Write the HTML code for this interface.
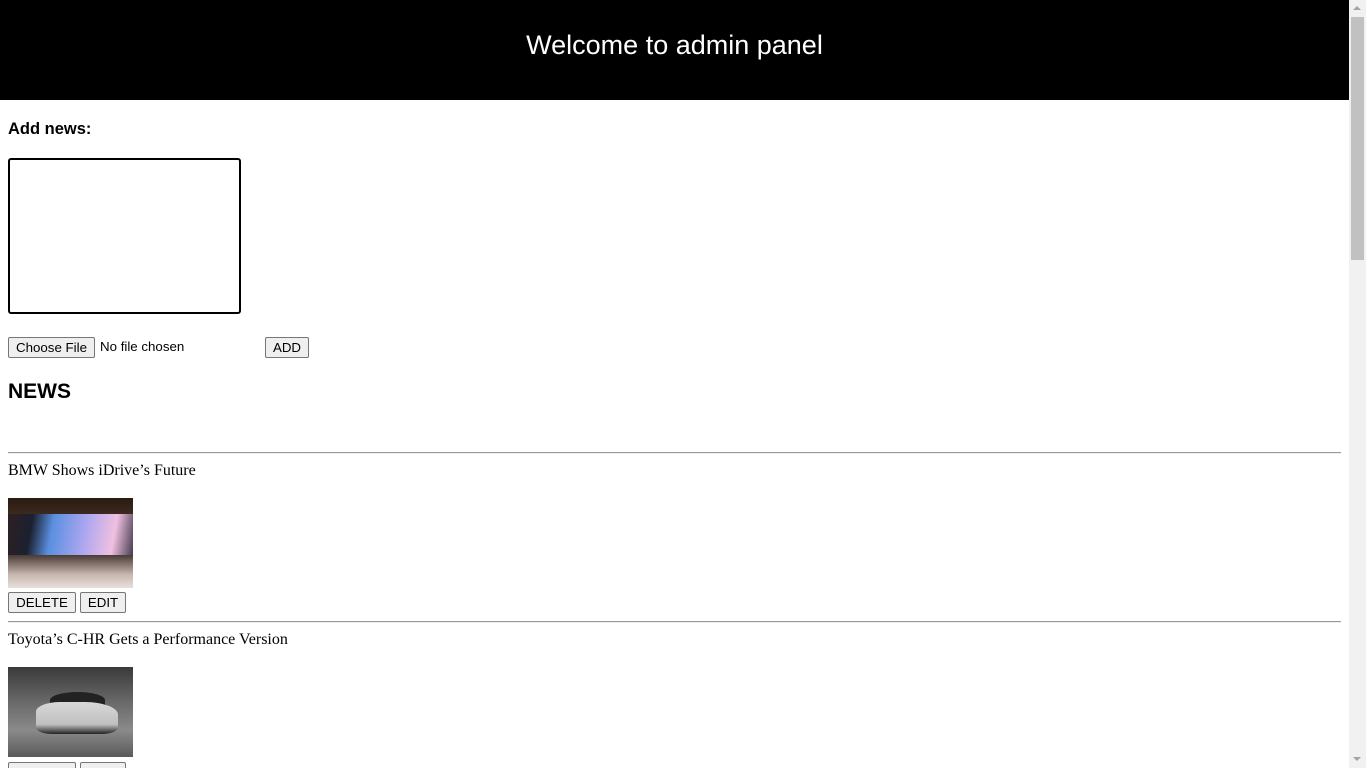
<!DOCTYPE html>
<html style="overflow:hidden;height:768px"><head><meta charset="utf-8"><style>
*{box-sizing:border-box}
body{margin:0;width:1366px;height:768px;overflow:hidden;position:relative;background:#fff;font-family:"Liberation Sans",sans-serif}
.a{position:absolute}
.hdr{left:0;top:0;width:1349px;height:100px;background:#000;color:#fff;font-family:"Liberation Sans",sans-serif;font-size:27px;text-align:center;line-height:90px}
.btn{position:absolute;height:21px;border:1px solid #767676;border-radius:2px;background:#efefef;font-size:13.3px;line-height:19px;text-align:center;color:#000;font-family:"Liberation Sans",sans-serif}
.hr{left:8px;width:1333px;height:2px;border-top:1px solid #9a9a9a;border-bottom:1px solid #eee}
.t{font-family:"Liberation Serif",serif;font-size:16px;left:8px}
.sb{left:1349px;top:0;width:17px;height:768px;background:#f1f1f1}
</style></head><body>
<div class="a hdr">Welcome to admin panel</div>
<div class="a" style="left:8px;top:120px;font-weight:bold;font-size:16.5px">Add news:</div>
<div class="a" style="left:8px;top:158px;width:233px;height:156px;border:2px solid #000;border-radius:3px"></div>
<div class="btn" style="left:8px;top:337px;width:87px">Choose File</div>
<div class="a" style="left:100px;top:339px;font-size:13.3px">No file chosen</div>
<div class="btn" style="left:265px;top:337px;width:44px">ADD</div>
<div class="a" style="left:8px;top:380px;font-weight:bold;font-size:21px">NEWS</div>
<div class="a hr" style="top:452px"></div>
<div class="a t" style="top:462px">BMW Shows iDrive’s Future</div>
<div class="a" style="left:8px;top:498px;width:125px;height:90px;background:linear-gradient(180deg,#2a1a10 0%,#3a2a20 18%,transparent 18%),linear-gradient(100deg,#302020 0%,#1b2030 20%,#5a8fe0 35%,#b0a8f0 60%,#f0c0e0 80%,#1a1a2a 100%);"></div>
<div class="a" style="left:8px;top:555px;width:125px;height:33px;background:linear-gradient(180deg,#4a3a35,#c8b8b0 60%,#e8e0dc)"></div>
<div class="btn" style="left:8px;top:592px;width:68px">DELETE</div>
<div class="btn" style="left:80px;top:592px;width:46px">EDIT</div>
<div class="a hr" style="top:621px"></div>
<div class="a t" style="top:631px">Toyota’s C-HR Gets a Performance Version</div>
<div class="a" style="left:8px;top:667px;width:125px;height:90px;background:linear-gradient(180deg,#3a3a3a,#6a6a6a 40%,#8a8a8a 70%,#5a5a5a)"></div>
<div class="a" style="left:50px;top:692px;width:55px;height:16px;border-radius:50% 50% 10% 10%;background:#222"></div>
<div class="a" style="left:36px;top:702px;width:82px;height:32px;border-radius:30% 40% 20% 20%;background:linear-gradient(180deg,#d8d8d8,#c0c0c0 70%,#222)"></div>
<div class="btn" style="left:8px;top:762px;width:68px">DELETE</div>
<div class="btn" style="left:80px;top:762px;width:46px">EDIT</div>
<div class="a sb"></div>
<div class="a" style="left:1351px;top:17px;width:13px;height:243px;background:#c1c1c1"></div>
<div class="a" style="left:1353px;top:6px;width:0;height:0;border-left:4px solid transparent;border-right:4px solid transparent;border-bottom:4px solid #a3a3a3"></div>
<div class="a" style="left:1353px;top:757px;width:0;height:0;border-left:4px solid transparent;border-right:4px solid transparent;border-top:4px solid #a3a3a3"></div>
</body></html>
